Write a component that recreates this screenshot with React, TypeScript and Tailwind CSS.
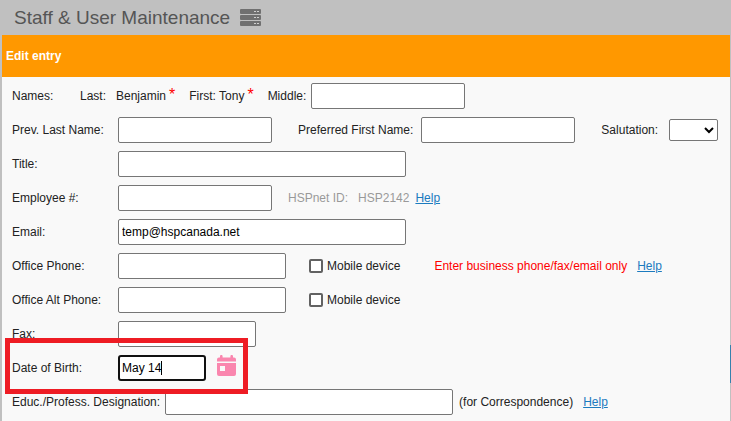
import React, { useState } from 'react';

const inputClass = 'h-[26px] rounded-[2px] border border-[#767676] bg-white px-[3px] text-black outline-none';

function ServerIcon() {
  return (
    <svg width="21" height="18" viewBox="0 0 21 18" aria-hidden="true">
      {[0, 6, 12].map(y => (
        <g key={y}>
          <rect x="0" y={y} width="21" height="5" rx="1" fill="#707070" />
          <rect x="14" y={y + 2} width="2" height="1" fill="#d0d0d0" />
          <rect x="17" y={y + 2} width="2" height="1" fill="#d0d0d0" />
        </g>
      ))}
    </svg>
  );
}

function CalendarIcon() {
  return (
    <svg width="19" height="21" viewBox="0 0 19 21" fill="#fa86ae" aria-hidden="true">
      <path d="M3 2.5V1.2a1.2 1.2 0 0 1 2.6 0v1.3h7.8V1.2a1.2 1.2 0 0 1 2.6 0v1.3h1a2 2 0 0 1 2 2v2H0v-2a2 2 0 0 1 2-2z" />
      <path fillRule="evenodd" d="M0 8h19v11a2 2 0 0 1-2 2H2a2 2 0 0 1-2-2zm3 3v5h5v-5z" />
    </svg>
  );
}

function HelpLink({ className }: { className: string }) {
  return (
    <a href="#help" className={`text-[#1c7bbf] underline ${className}`}>Help</a>
  );
}

function Required() {
  return <span className="ml-[3px] self-start text-[16px] leading-6 text-[#f00]">*</span>;
}

function MobileCheckbox({ id }: { id: string }) {
  return (
    <div className="ml-[23px] flex items-center">
      <input id={id} type="checkbox" className="h-[14px] w-[14px] appearance-none rounded-[2px] border-2 border-[#626262] bg-white checked:bg-[#626262]" />
      <label htmlFor={id} className="ml-1">Mobile device</label>
    </div>
  );
}

function Field({ id, label, width, children }: { id: string; label: string; width: string; children?: React.ReactNode }) {
  const [value, setValue] = useState(id === 'email' ? 'temp@hspcanada.net' : '');

  return (
    <div className="flex items-center">
      <label htmlFor={id} className="w-[106px] shrink-0">{label}</label>
      <input id={id} type="text" value={value} onChange={e => setValue(e.target.value)} className={`${inputClass} ${width}`} />
      {children}
    </div>
  );
}

function App() {
  const [birthDate, setBirthDate] = useState('May 14');
  const [touched, setTouched] = useState(false);

  return (
    <div className="min-h-screen bg-[#c0c0c0] font-['Liberation_Sans',Arial,sans-serif] text-[12px] leading-4 whitespace-nowrap text-[#222]">
      {/* page title */}
      <header className="flex h-[35px] items-center pl-[14px]">
        <h1 className="text-[19px] leading-6 text-[#555]">Staff &amp; User Maintenance</h1>
        <span className="ml-[10px]"><ServerIcon /></span>
      </header>

      <div className="flex pl-[2px]">
        <main className="min-w-0 flex-1 overflow-hidden bg-[#f9f9f9]">
          <h2 className="flex h-[42px] items-center bg-[#ff9800] pl-1 font-bold text-white">Edit entry</h2>

          <form className="flex flex-col gap-2 py-[6px] pl-[10px]" onSubmit={e => e.preventDefault()}>
            <div className="flex items-center">
              <span className="w-[68px]">Names:</span>
              <span className="w-9">Last:</span>
              <span>Benjamin</span>
              <Required />
              <span className="ml-[14px]">First: Tony</span>
              <Required />
              <label htmlFor="middle" className="ml-[14px]">Middle:</label>
              <input id="middle" type="text" className={`${inputClass} ml-[5px] w-[154px]`} />
            </div>

            <Field id="prevLast" label="Prev. Last Name:" width="w-[154px]">
              <label htmlFor="preferred" className="ml-[26px]">Preferred First Name:</label>
              <input id="preferred" type="text" className={`${inputClass} ml-2 w-[154px]`} />
              <label htmlFor="salutation" className="ml-[26px]">Salutation:</label>
              <select id="salutation" className="ml-[11px] h-[22px] w-[49px] rounded-[2px] border border-[#767676] bg-white text-black">
                <option value=""></option>
                <option>Mr.</option>
                <option>Ms.</option>
                <option>Dr.</option>
              </select>
            </Field>

            <Field id="title" label="Title:" width="w-[288px]" />

            <Field id="employee" label="Employee #:" width="w-[154px]">
              <span className="ml-4 text-[#999]">HSPnet ID:</span>
              <span className="ml-[10px] text-[#999]">HSP2142</span>
              <HelpLink className="ml-[6px]" />
            </Field>

            <Field id="email" label="Email:" width="w-[288px]" />

            <Field id="phone" label="Office Phone:" width="w-[168px]">
              <MobileCheckbox id="phoneMobile" />
              <span className="ml-[34px] text-[#f00]">Enter business phone/fax/email only</span>
              <HelpLink className="ml-[10px]" />
            </Field>

            <Field id="altPhone" label="Office Alt Phone:" width="w-[168px]">
              <MobileCheckbox id="altPhoneMobile" />
            </Field>

            <Field id="fax" label="Fax:" width="w-[138px]" />

            <div className="relative flex items-center">
              <label htmlFor="birthDate" className="w-[106px]">Date of Birth:</label>
              <div className="relative">
                <input
                  id="birthDate"
                  type="text"
                  value={birthDate}
                  onChange={e => setBirthDate(e.target.value)}
                  onFocus={() => setTouched(true)}
                  className="block h-[26px] w-[88px] rounded-[3px] border-2 border-[#101010] bg-white px-[2px] text-black outline-none"
                />
                {!touched && (
                  <span className="pointer-events-none absolute top-0 left-0 flex h-[26px] items-center pl-1">
                    <span className="invisible">{birthDate}</span>
                    <span className="h-[14px] w-px bg-black" />
                  </span>
                )}
              </div>
              <button type="button" aria-label="Pick date" className="ml-[11px] self-start"><CalendarIcon /></button>
              {/* highlight frame around the birth date row */}
              <div className="pointer-events-none absolute -top-[17px] -left-[7px] h-14 w-[243px] border-5 border-[#ee1c24]" />
            </div>

            <div className="flex items-center">
              <label htmlFor="designation">Educ./Profess. Designation:</label>
              <input id="designation" type="text" className={`${inputClass} ml-[5px] w-[288px]`} />
              <span className="ml-[6px]">(for Correspondence)</span>
              <HelpLink className="ml-[10px]" />
            </div>
          </form>
        </main>

        {/* sliver of the page behind */}
        <div className="flex w-px flex-col pt-[310px]">
          <div className="h-[38px] bg-[#3681ad]" />
        </div>
      </div>
    </div>
  );
}

export default App;
